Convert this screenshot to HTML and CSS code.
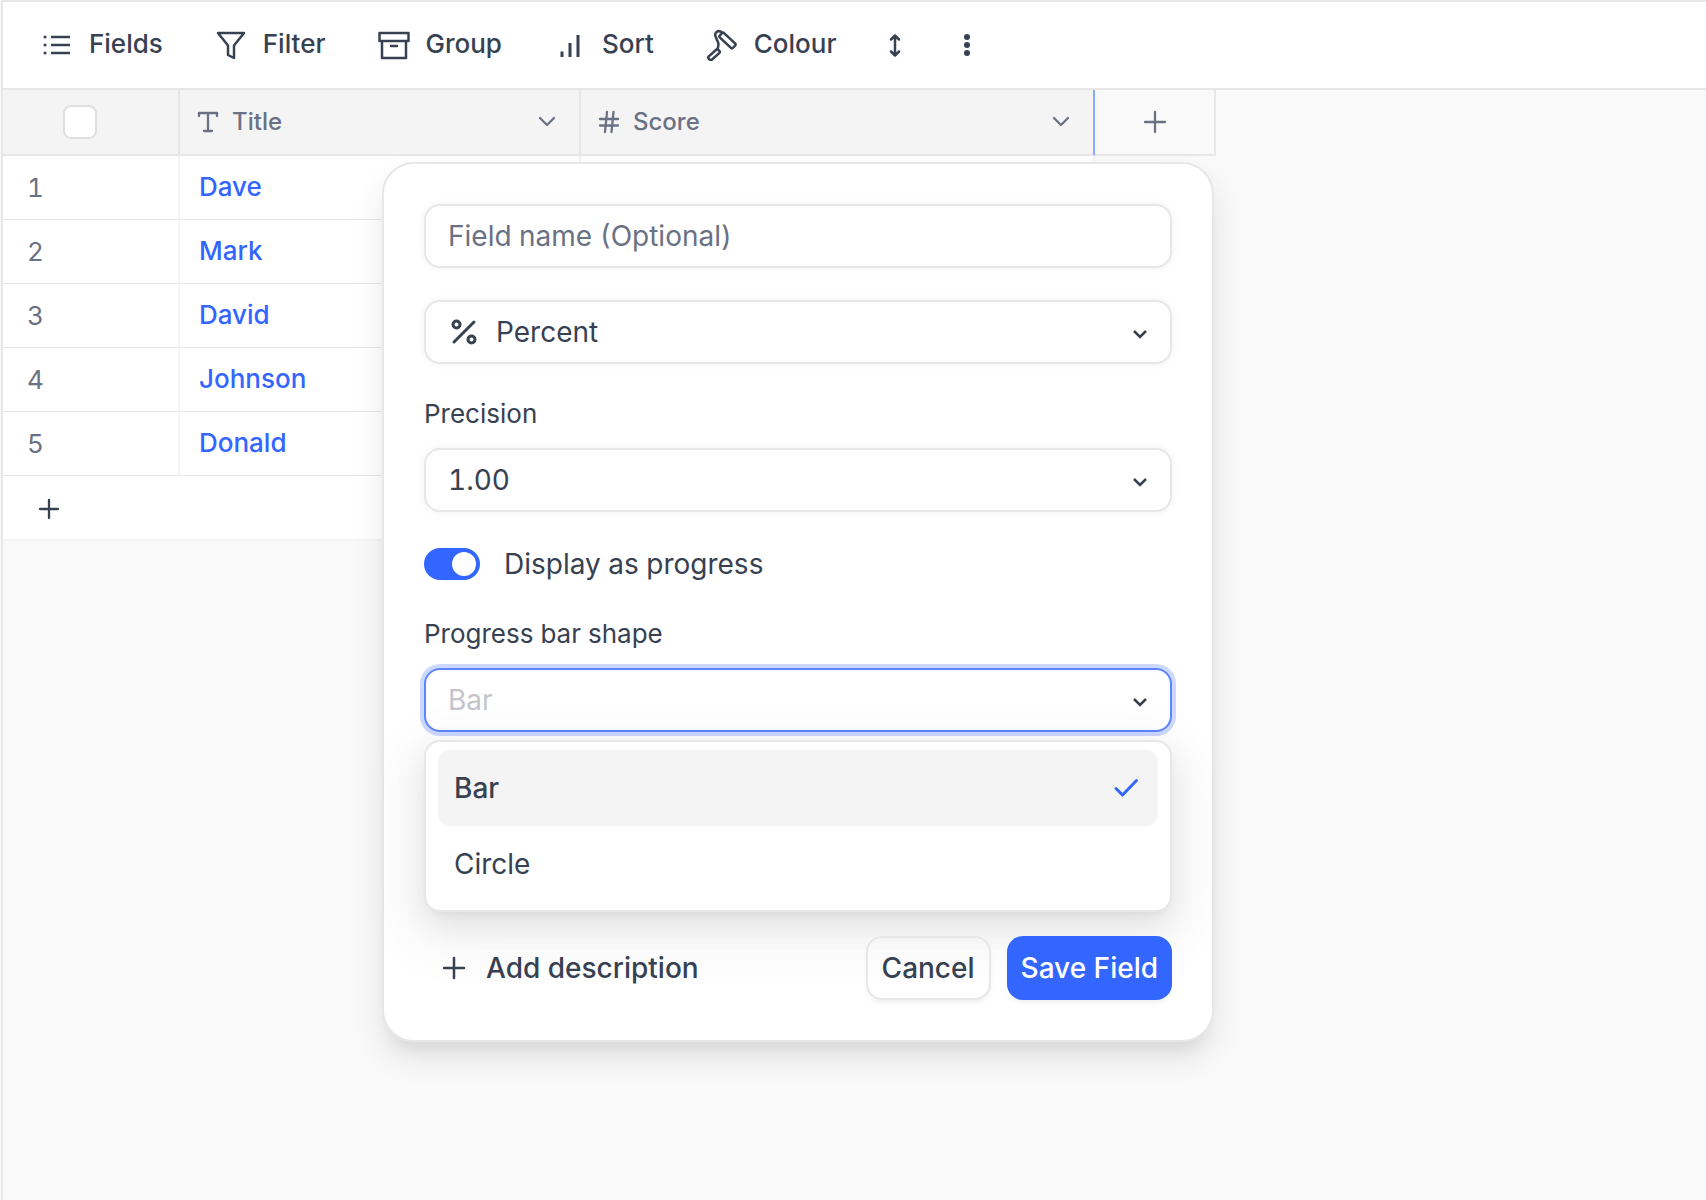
FILE: index.html
```html
<!DOCTYPE html>
<html lang="en">
<head>
    <meta charset="UTF-8">
    <meta name="viewport" content="width=device-width, initial-scale=1.0">
    <title>Scores</title>
    <link rel="stylesheet" href="styles.css">
</head>
<body>
    <div class="toolbar">
        <div class="tools">
            <button type="button" class="tool">
                <svg class="icon" viewBox="0 0 32 32"><path d="M10 8h19M10 16h19M10 24h19" stroke-linecap="butt"/><path d="M4 8h.1M4 16h.1M4 24h.1" stroke-width="3"/></svg>
                <span>Fields</span>
            </button>
            <button type="button" class="tool">
                <svg class="icon" viewBox="0 0 32 32"><path d="M3 4h26L19 16.500V29l-6-3v-9.500z"/></svg>
                <span>Filter</span>
            </button>
            <button type="button" class="tool">
                <svg class="icon" viewBox="0 0 32 32"><path d="M1.500 4h29v8h-29zM4 12v17h24V12M13 17h6"/></svg>
                <span>Group</span>
            </button>
            <button type="button" class="tool">
                <svg class="icon" viewBox="0 0 32 32"><path d="M8 22.500V28M16 14v14M24 6v22" stroke-width="3" stroke-linecap="butt"/></svg>
                <span>Sort</span>
            </button>
            <button type="button" class="tool">
                <svg class="icon" viewBox="0 0 32 32"><rect x="12.500" y="8.500" width="18" height="6" rx="1.500" transform="rotate(43 21.500 11.500)"/><path d="M15.500 3Q12 1 10 3.500 8.500 5.500 10 8.500L12.300 14q.5 2-.8 6"/><rect x="1.500" y="23.500" width="13" height="4.500" rx="1.500" transform="rotate(-42 8 25.750)"/></svg>
                <span>Colour</span>
            </button>
        </div>
        <div class="icon-tools">
            <button type="button" class="tool" aria-label="Row height">
                <svg class="icon" viewBox="0 0 32 32"><path d="M16 7v19M12 10.500l4-4 4 4M12 22.500l4 4 4-4"/></svg>
            </button>
            <button type="button" class="tool" aria-label="More">
                <svg class="icon dots" viewBox="0 0 32 32"><circle cx="16" cy="8" r="3"/><circle cx="16" cy="16" r="3"/><circle cx="16" cy="24" r="3"/></svg>
            </button>
        </div>
    </div>

    <div class="grid">
        <table>
            <colgroup>
                <col class="col-number">
                <col class="col-title">
                <col class="col-score">
                <col class="col-add">
            </colgroup>
            <thead>
                <tr>
                    <th class="check-head"><input type="checkbox" class="check-all" aria-label="Select all"></th>
                    <th>
                        <div class="head">
                            <svg class="head-icon" viewBox="0 0 24 24"><path d="M3 6V3h18v3M12 3v18M8 21h8"/></svg>
                            <span>Title</span>
                            <svg class="head-arrow" viewBox="0 0 24 24"><path d="M5 8l7 7 7-7"/></svg>
                        </div>
                    </th>
                    <th class="resizing">
                        <div class="head">
                            <svg class="head-icon" viewBox="0 0 24 24"><path d="M3 9h18M3 15.500h18M10 2L8 22M16.500 2l-2 20"/></svg>
                            <span>Score</span>
                            <svg class="head-arrow" viewBox="0 0 24 24"><path d="M5 8l7 7 7-7"/></svg>
                        </div>
                    </th>
                    <th class="add-head">
                        <button type="button" class="plain" aria-label="Add field">
                            <svg class="head-icon" viewBox="0 0 24 24"><path d="M12 2v20M2 12h20"/></svg>
                        </button>
                    </th>
                </tr>
            </thead>
            <tbody>
                <tr><td class="number">1</td><td class="name">Dave</td><td></td></tr>
                <tr><td class="number">2</td><td class="name">Mark</td><td></td></tr>
                <tr><td class="number">3</td><td class="name">David</td><td></td></tr>
                <tr><td class="number">4</td><td class="name">Johnson</td><td></td></tr>
                <tr><td class="number">5</td><td class="name">Donald</td><td></td></tr>
                <tr class="add-row">
                    <td colspan="3">
                        <button type="button" class="plain" aria-label="Add row">
                            <svg class="head-icon" viewBox="0 0 24 24"><path d="M12 3v18M3 12h18"/></svg>
                        </button>
                    </td>
                </tr>
            </tbody>
        </table>

        <form class="field-modal">
            <input type="text" class="control" placeholder="Field name (Optional)" aria-label="Field name">

            <div class="select">
                <svg class="icon select-icon" viewBox="0 0 32 32"><circle cx="8.500" cy="8.500" r="3.500"/><circle cx="23.500" cy="23.500" r="3.500"/><path d="M26 6L6 26"/></svg>
                <select class="control with-icon" aria-label="Field type">
                    <option>Percent</option>
                </select>
                <svg class="arrow" viewBox="0 0 24 24"><path d="M6 9l6 6 6-6"/></svg>
            </div>

            <div class="group">
                <label for="precision">Precision</label>
                <div class="select">
                    <select id="precision" class="control">
                        <option>1.00</option>
                    </select>
                    <svg class="arrow" viewBox="0 0 24 24"><path d="M6 9l6 6 6-6"/></svg>
                </div>
            </div>

            <label class="switch-row">
                <input type="checkbox" class="switch" checked>
                Display as progress
            </label>

            <div class="group">
                <label for="shape">Progress bar shape</label>
                <div class="select">
                    <select id="shape" class="control open">
                        <option>Bar</option>
                    </select>
                    <svg class="arrow" viewBox="0 0 24 24"><path d="M6 9l6 6 6-6"/></svg>
                    <div class="menu" role="listbox" aria-label="Progress bar shape">
                        <button type="button" class="option selected" role="option" aria-selected="true">
                            Bar
                            <svg class="icon" viewBox="0 0 32 32"><path d="M6 16.500l6.500 6.500L26.500 8.500"/></svg>
                        </button>
                        <button type="button" class="option" role="option" aria-selected="false">Circle</button>
                    </div>
                </div>
            </div>

            <div class="footer">
                <button type="button" class="add-description">
                    <svg class="icon" viewBox="0 0 32 32"><path d="M16 6v20M6 16h20"/></svg>
                    Add description
                </button>
                <button type="button" class="btn">Cancel</button>
                <button type="submit" class="btn primary">Save Field</button>
            </div>
        </form>
    </div>
</body>
</html>
```
FILE: styles.css
```css
* {
    box-sizing: border-box;
}
body {
    margin: 0 0 0 1px;
    min-height: 100vh;
    border-left: 2px solid #e7e7e9;
    background-color: #f9f9fa;
    color: #374151;
    font-family: Inter, sans-serif;
    font-size: 28px;
    font-feature-settings: "tnum";
}
button, input, select {
    font: inherit;
    font-feature-settings: inherit;
    color: inherit;
}
button {
    padding: 0;
    border: none;
    background: none;
    cursor: pointer;
}
svg {
    display: block;
    flex: none;
    fill: none;
    stroke: currentColor;
    stroke-width: 2;
    stroke-linecap: round;
    stroke-linejoin: round;
}
.icon {
    width: 32px;
    height: 32px;
    stroke-width: 2.5;
}
.dots {
    fill: currentColor;
    stroke: none;
}

/* toolbar */
.toolbar {
    display: flex;
    align-items: center;
    gap: 42px;
    height: 90px;
    padding: 0 38px;
    border-top: 2px solid #e7e7e9;
    border-bottom: 2px solid #e7e7e9;
    background-color: #fff;
}
.tools {
    display: flex;
    gap: 52px;
}
.icon-tools {
    display: flex;
    gap: 40px;
}
.tool {
    display: flex;
    align-items: center;
    gap: 16px;
    font-size: 26px;
    font-weight: 500;
    line-height: 30px;
}
.tool span {
    padding-bottom: 2px;
}

/* grid */
.grid {
    position: relative;
    width: fit-content;
}
table {
    width: 1213px;
    table-layout: fixed;
    border-spacing: 0;
}
.col-number {
    width: 177px;
}
.col-title {
    width: 401px;
}
.col-score {
    width: 514px;
}
.col-add {
    width: 121px;
}
th {
    height: 66px;
    padding: 0 18px 0 16px;
    border-right: 2px solid #e7e7e9;
    border-bottom: 2px solid #e7e7e9;
    background-color: #f4f4f5;
    color: #6a7184;
    font-size: 24px;
    font-weight: 500;
    text-align: left;
}
.head {
    display: flex;
    align-items: center;
}
.head span {
    flex: 1;
    margin-left: 12px;
    padding-bottom: 2px;
}
.head-icon {
    width: 24px;
    height: 24px;
    stroke-width: 2.3;
}
.head-arrow {
    width: 24px;
    height: 24px;
    margin-right: 2px;
    stroke-width: 2.3;
}
.resizing {
    border-right-color: #85a9ff;
}
.check-head {
    padding: 0 0 0 60px;
}
.check-all {
    display: block;
    appearance: none;
    width: 34px;
    height: 34px;
    margin: 0;
    border: 2px solid #dfdfe1;
    border-radius: 8px;
    background-color: #fff;
}
.add-head {
    padding: 0;
    background-color: #f9f9fa;
}
.add-head .plain {
    margin: 0 auto;
}
.plain {
    display: block;
}
td {
    height: 64px;
    padding: 0 18px;
    border-right: 2px solid #f4f4f5;
    border-bottom: 1px solid #e7e7e9;
    background-color: #fff;
    font-size: 26px;
}
.number {
    padding-left: 24px;
    color: #6a7184;
}
.name {
    padding-bottom: 2px;
    padding-left: 19px;
    color: #3366ff;
    font-weight: 500;
}
.add-row td {
    height: 65px;
    padding-top: 2px;
    padding-left: 34px;
    border-right: none;
    border-bottom: 2px solid #f4f4f5;
}

/* field editor */
.field-modal {
    position: absolute;
    top: 72px;
    right: 2px;
    width: 832px;
    display: flex;
    flex-direction: column;
    gap: 32px;
    padding: 40px;
    border: 2px solid #e7e7e9;
    border-radius: 32px;
    background-color: #fff;
    box-shadow: 0 16px 16px -8px rgba(0, 0, 0, 0.06), 0 16px 32px rgba(0, 0, 0, 0.09);
}
.control {
    display: block;
    appearance: none;
    width: 100%;
    height: 64px;
    padding: 0 22px;
    border: 2px solid #e7e7e9;
    border-radius: 16px;
    outline: none;
    background-color: #fff;
    box-shadow: 0 0 8px rgba(0, 0, 0, 0.06);
}
.control::placeholder {
    color: #6a7184;
}
.select {
    position: relative;
}
.with-icon {
    padding-left: 70px;
}
.select-icon {
    position: absolute;
    top: 16px;
    left: 24px;
    stroke-width: 3;
}
.arrow {
    position: absolute;
    top: 22px;
    right: 20px;
    width: 24px;
    height: 24px;
    stroke-width: 2.5;
    stroke-linecap: butt;
    stroke-linejoin: miter;
}
.control.open {
    border-color: #5c85ff;
    color: #c4c5cc;
    box-shadow: 0 0 0 4px #ccd8ff;
}
.group label {
    display: block;
    margin-bottom: 16px;
    font-size: 26px;
    line-height: 36px;
}
.switch-row {
    display: flex;
    align-items: center;
    gap: 24px;
    line-height: 40px;
}
.switch {
    appearance: none;
    width: 56px;
    height: 32px;
    margin: 0;
    padding: 4px;
    border-radius: 16px;
    background-color: #3366ff;
}
.switch::before {
    content: "";
    display: block;
    width: 24px;
    height: 24px;
    margin-left: auto;
    border-radius: 50%;
    background-color: #fff;
}
.menu {
    position: absolute;
    top: 72px;
    left: 0;
    right: 0;
    padding: 8px 12px;
    border: 2px solid #e7e7e9;
    border-radius: 16px;
    background-color: #fff;
    box-shadow: 0 12px 32px rgba(0, 0, 0, 0.08), 0 6px 12px -8px rgba(0, 0, 0, 0.12), 0 18px 56px 16px rgba(0, 0, 0, 0.05);
}
.option {
    display: flex;
    align-items: center;
    justify-content: space-between;
    width: 100%;
    height: 76px;
    padding: 0 16px;
    border-radius: 12px;
}
.option.selected {
    background-color: #f4f4f5;
    font-weight: 500;
}
.option .icon {
    color: #3366ff;
    stroke-width: 3;
}
.footer {
    display: flex;
    align-items: center;
    gap: 16px;
    margin-top: 172px;
}
.add-description {
    position: relative;
    display: flex;
    align-items: center;
    gap: 16px;
    margin-right: auto;
    padding-left: 14px;
    font-weight: 500;
}
.btn {
    position: relative;
    height: 64px;
    padding: 0 14px;
    border: 2px solid #e7e7e9;
    border-radius: 16px;
    font-weight: 500;
    box-shadow: 0 4px 6px -2px rgba(0, 0, 0, 0.08);
}
.btn.primary {
    border: none;
    background-color: #3366ff;
    color: #fff;
}
```
